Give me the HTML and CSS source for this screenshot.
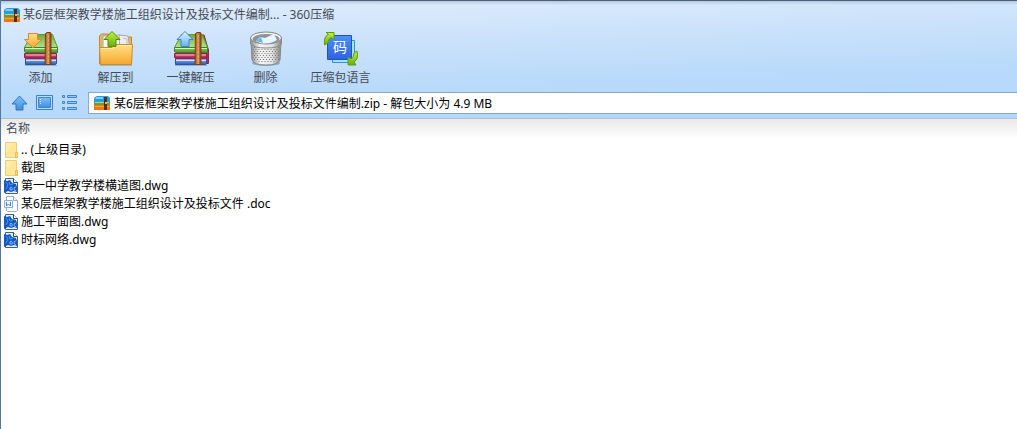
FILE: index.html
```html
<!DOCTYPE html>
<html lang="zh-CN">
<head>
<meta charset="utf-8">
<title>360压缩</title>
<link rel="stylesheet" href="styles.css">
</head>
<body>
<svg class="defs" aria-hidden="true">
  <defs>
    <linearGradient id="green" x2="0" y2="1"><stop stop-color="#6da83f"/><stop offset=".5" stop-color="#93c765"/><stop offset="1" stop-color="#b5df8c"/></linearGradient>
    <linearGradient id="spine" x2="0" y2="1"><stop stop-color="#8ccf5b"/><stop offset="1" stop-color="#45962a"/></linearGradient>
    <linearGradient id="red" x2="0" y2="1"><stop stop-color="#dc6089"/><stop offset="1" stop-color="#a51843"/></linearGradient>
    <linearGradient id="blue" x2="0" y2="1"><stop stop-color="#8fc0f5"/><stop offset="1" stop-color="#2858b4"/></linearGradient>
    <linearGradient id="belt"><stop stop-color="#9a4c18"/><stop offset=".45" stop-color="#d89458"/><stop offset="1" stop-color="#8c4414"/></linearGradient>
    <linearGradient id="orange" x2="0" y2="1"><stop stop-color="#ffe08a"/><stop offset="1" stop-color="#f8a62c"/></linearGradient>
    <linearGradient id="lime" x2="0" y2="1"><stop stop-color="#c8ef3c"/><stop offset="1" stop-color="#69ae0c"/></linearGradient>
    <linearGradient id="sky" x2="0" y2="1"><stop stop-color="#e2f5ff"/><stop offset="1" stop-color="#62b0f5"/></linearGradient>
    <linearGradient id="nav" x2="0" y2="1"><stop stop-color="#7cc0f8"/><stop offset="1" stop-color="#3f8fe0"/></linearGradient>
    <linearGradient id="tile" x2="0" y2="1"><stop stop-color="#4a92f5"/><stop offset="1" stop-color="#2d62dd"/></linearGradient>
    <linearGradient id="steel"><stop stop-color="#8c8c8c"/><stop offset=".3" stop-color="#f4f4f4"/><stop offset=".7" stop-color="#e4e4e4"/><stop offset="1" stop-color="#858585"/></linearGradient>
    <pattern id="holes" width="3" height="4" patternUnits="userSpaceOnUse"><path d="M0 0h1v1H0zM1.500 2h1v1h-1z" fill="#777"/></pattern>
    <symbol id="books" viewBox="0 0 36 36">
      <path d="M2 34h32v1H2z" fill="#5a86b8" opacity=".5"/>
      <path d="M2.500 27.500h31v5l-1 1h-30z" fill="url(#blue)" stroke="#2a539e"/>
      <path d="M3 29h30v1H3z" fill="#cfe3ff"/>
      <path d="M1.500 22.500h32v5h-31l-1-1z" fill="url(#red)" stroke="#9a1c48"/>
      <path d="M3 23.500h30v1H3z" fill="#f2b6ca"/>
      <path d="M8.500 3.500h21l5 13h-33z" fill="url(#green)" stroke="#5a9c38"/>
      <path d="M1.500 16.500h33v5h-32l-1-1z" fill="url(#spine)" stroke="#3b8524"/>
      <path d="M2 17h32v1H2z" fill="#d6f2bc"/>
      <path d="M22.500 2.500l1.500-1h3.500l.5 1v31h-6z" fill="url(#belt)" stroke="#81400f"/>
      <path d="M25.500 4v29" stroke="#f0bf8b" stroke-dasharray="3 1" opacity=".6"/>
    </symbol>
    <symbol id="archive" viewBox="0 0 16 14">
      <path d="M1 1l2-1h11l2 2v5H0V2z" fill="#2c9be2"/>
      <path d="M2 1h7v2H1z" fill="#7bd0f8"/>
      <path d="M0 6h16v3H0z" fill="#5da528"/><path d="M1 6h14v1H1z" fill="#b4db78"/>
      <path d="M0 9h16v5H0z" fill="#ee7519"/><path d="M1 10h14v1H1z" fill="#fba63c"/>
      <path d="M10 1h3v13h-3z" fill="#5a2a16"/><path d="M11 6h2v2h-2z" fill="#e9b071"/>
    </symbol>
    <symbol id="folder" viewBox="0 0 14 16">
      <path d="M1.500.5h11v10h1v5h-12z" fill="#ffe596" stroke="#edce70"/>
      <path d="M2 1h8L2 11z" fill="#fff0b5" opacity=".7"/>
      <path d="M11.500 10.500h2v5h-2z" fill="#f8d876" stroke="#e2bf62"/>
    </symbol>
    <symbol id="dwg" viewBox="0 0 14 16">
      <path d="M1.500.5h8l4 4v11h-12z" fill="#e6f1fc" stroke="#3f5f85"/>
      <path d="M0 2l3 1 3-1 2 3 4 1 1 3v5l-3-1-3 1-3-1-4 2z" fill="#1358c4"/>
      <path d="M2 4l2 3-2 4M5 4l1 3 3-1" stroke="#429cf0" fill="none"/>
      <path d="M6 9.500q3-1 2 2.500H6zM12 9q-2.500 0-2 2t2 1.500" fill="none" stroke="#a8cdf5" stroke-width=".8"/>
      <path d="M9.500.5v4h4" fill="#fff" stroke="#2c4461"/>
    </symbol>
    <symbol id="doc" viewBox="0 0 14 16">
      <path d="M2.500.5h7l4 4v10l-1 1h-9l-1-1z" fill="#fff" stroke="#9aa9bd"/>
      <path d="M9.500.5v4h4" fill="#eef3fa" stroke="#9aa9bd"/>
      <path d="M.5 4.500h8v7h-8z" fill="#f2f7ff" stroke="#8aaee0"/>
      <path d="M2.500 6v4l2-2 2 2V6" fill="none" stroke="#4a82cf"/>
    </symbol>
  </defs>
</svg>
<div class="window">
  <header class="chrome">
    <div class="titlebar">
      <svg class="app-icon"><use href="#archive"/></svg>
      <h1 class="title">某6层框架教学楼施工组织设计及投标文件编制... - 360压缩</h1>
    </div>
    <div class="toolbar">
      <button class="tool" type="button">
        <svg class="tool-icon" viewBox="0 0 36 36"><use href="#books"/><path d="M5.500 2.500h9v6h4l-8.500 8.500-8.500-8.500h4z" fill="url(#orange)" stroke="#d98a28"/></svg>
        <span>添加</span>
      </button>
      <button class="tool" type="button">
        <svg class="tool-icon" viewBox="0 0 36 36">
          <path d="M2 34h32v1H2z" fill="#67809b" opacity=".4"/>
          <path d="M1.500 5l2-2h7l2 3h21v27h-32z" fill="#e8b658" stroke="#c08c30"/>
          <path d="M5 5l17-1 1 16H5z" fill="#fafafa" stroke="#aaa"/>
          <path d="M21 4l9 1 2 14H22z" fill="#eee" stroke="#aaa"/><path d="M25 7l4 1v10" fill="none" stroke="#bbb"/>
          <path d="M1.500 16.500H14l3-3h17.500l-1 20h-31z" fill="url(#orange)" stroke="#cf8d20"/>
          <path d="M3 17.500h11.500l3-3h16" fill="none" stroke="#fff0b0"/>
          <path d="M14 .5l8 8h-4v7h-8v-7H6z" fill="url(#lime)" stroke="#4b920b"/>
        </svg>
        <span>解压到</span>
      </button>
      <button class="tool" type="button">
        <svg class="tool-icon" viewBox="0 0 36 36"><path d="M29 4h2l5 17v11l-3 1z" fill="#b92453" stroke="#8e1740"/><use href="#books"/><path d="M12 .5l8 8h-4v7H8v-7H4z" fill="url(#sky)" stroke="#3f83ce"/></svg>
        <span>一键解压</span>
      </button>
      <button class="tool" type="button">
        <svg class="tool-icon" viewBox="0 0 36 36">
          <ellipse cx="18" cy="32" rx="14" ry="3" fill="#5f7893" opacity=".5"/>
          <path d="M3 10l1 19q2 5 14 5t14-5l1-19z" fill="url(#steel)" stroke="#858585"/>
          <path d="M4 15q14 6 28 0l-1 14q-13 6-26 0z" fill="url(#holes)"/>
          <path d="M2.500 7v6q4 4 15.500 4t15.500-4V7z" fill="url(#steel)" stroke="#8a8a8a"/>
          <ellipse cx="18" cy="7" rx="15.500" ry="6" fill="#f5f5f5" stroke="#858585"/>
          <ellipse cx="18" cy="8" rx="13.500" ry="5" fill="#8c9399"/>
          <path d="M8 10l4-4 5 1 9-4 3 6q-8 5-17 3z" fill="#e9f5fd"/><path d="M8 10l5-4 2 6z" fill="#67b6e8"/>
        </svg>
        <span>删除</span>
      </button>
      <button class="tool" type="button">
        <svg class="tool-icon" viewBox="0 0 36 36">
          <path d="M9.500 9.500h22v22h-22z" fill="#a6e2ff" stroke="#2397dd"/>
          <path d="M4.500 4.500h24v24h-24z" fill="url(#tile)" stroke="#2252bb"/>
          <text class="glyph" x="17" y="21" text-anchor="middle">码</text>
          <path d="M1.500 14q-1-9 4-10.500L3 1.500h8v7l-3-2Q5 8 5 12z" fill="url(#lime)" stroke="#5b9e16"/>
          <path d="M34 20q2 8-3 11l2 3h-8v-8l3 2q3-2 3-6z" fill="url(#lime)" stroke="#5b9e16"/>
        </svg>
        <span>压缩包语言</span>
      </button>
    </div>
    <div class="navbar">
      <button class="nav" type="button" aria-label="上级目录"><svg viewBox="0 0 17 16"><path d="M8.500 1l7.500 8h-4v6H5V9H1z" fill="url(#nav)" stroke="#3377bf"/></svg></button>
      <button class="nav" type="button" aria-label="图标视图"><svg viewBox="0 0 17 16"><path d="M.5.500h16v14H.5z" fill="#b7ddfc" stroke="#3b82cb"/><path d="M2.500 2.500h12v10h-12z" fill="url(#nav)" stroke="#4388cd"/><path d="M4 4h1v1H4zM4 6h1v1H4zM4 8h1v1H4z" fill="#d9efff"/></svg></button>
      <button class="nav" type="button" aria-label="列表视图"><svg viewBox="0 0 17 16"><path d="M1.500.5h2v2h-2zM1.500 6.500h2v2h-2zM1.500 12.500h2v2h-2zM6.500.5h9v2h-9zM6.500 6.500h9v2h-9zM6.500 12.500h9v2h-9z" fill="#8ec8fa" stroke="#4384c6"/></svg></button>
      <label class="address"><svg class="app-icon"><use href="#archive"/></svg>
        <input class="path" type="text" aria-label="地址" value="某6层框架教学楼施工组织设计及投标文件编制.zip - 解包大小为 4.9 MB"></label>
    </div>
  </header>
  <main class="content">
    <table class="files">
      <thead><tr><th scope="col">名称</th></tr></thead>
      <tbody>
        <tr><td><div class="file"><svg><use href="#folder"/></svg><span>.. (上级目录)</span></div></td></tr>
        <tr><td><div class="file"><svg><use href="#folder"/></svg><span>截图</span></div></td></tr>
        <tr><td><div class="file"><svg><use href="#dwg"/></svg><span>第一中学教学楼横道图.dwg</span></div></td></tr>
        <tr><td><div class="file"><svg><use href="#doc"/></svg><span>某6层框架教学楼施工组织设计及投标文件 .doc</span></div></td></tr>
        <tr><td><div class="file"><svg><use href="#dwg"/></svg><span>施工平面图.dwg</span></div></td></tr>
        <tr><td><div class="file"><svg><use href="#dwg"/></svg><span>时标网络.dwg</span></div></td></tr>
      </tbody>
    </table>
  </main>
</div>
</body>
</html>
```
FILE: styles.css
```css
* { box-sizing: border-box; }
body {
  margin: 0;
  background: #fff;
  color: #000;
  font: 12px/18px "Noto Sans", "Noto Sans CJK SC", sans-serif;
}
button, input { font: inherit; }
svg { display: block; flex: none; }
.defs { position: absolute; width: 0; height: 0; }
.window {
  display: flex;
  flex-direction: column;
  min-height: 100vh;
  border-left: 1px solid #55779c;
}
.chrome {
  border-top: 1px solid #465f7d;
  border-bottom: 1px solid #b5bcc4;
  background:
    linear-gradient(#b8c8dc, transparent 4px),
    linear-gradient(179deg, #b3d7fc 0, #b7d9fa 30%, #c9e1fa 65%, #dcebfc 100%);
  background:
    linear-gradient(#b8c8dc, transparent 4px),
    linear-gradient(178deg, #dcebfc 8%, #cbe2fb 35%, #b9dafa 65%, #b3d7fc 90%);
}
.titlebar {
  display: flex;
  align-items: center;
  gap: 3px;
  padding: 5px 3px 4px;
}
.app-icon { width: 16px; height: 14px; }
.title { margin: 0; font-size: 12px; font-weight: 400; color: #454b55; white-space: nowrap; }
.toolbar { display: flex; padding-left: 2px; }
.tool {
  display: flex;
  flex-direction: column;
  align-items: center;
  gap: 2px;
  width: 75px;
  padding: 3px 0 2px;
  border: 0;
  background: none;
  color: #454b55;
  white-space: nowrap;
}
.tool-icon { width: 36px; height: 36px; }
.glyph { fill: #fff; font: 14px "Noto Sans CJK SC", sans-serif; }
.navbar { display: flex; align-items: center; gap: 8px; padding: 3px 0 4px 10px; }
.nav { width: 17px; padding: 0; border: 0; background: none; }
.nav svg { width: 17px; height: 16px; }
.address {
  display: flex;
  flex: 1;
  align-items: center;
  gap: 4px;
  height: 22px;
  margin-left: 2px;
  padding-left: 5px;
  border: 1px solid #86a9cf;
  border-right: 0;
  background: #fff;
}
.path { flex: 1; min-width: 0; padding: 1px 0 0; border: 0; outline: 0; background: none; color: #000; }
.content { flex: 1; background: linear-gradient(#e9e9e9, #fff 20px); }
.files { width: 100%; border-collapse: collapse; }
.files th { padding: 1px 5px 3px; text-align: left; font-weight: 400; color: #454b55; }
.files td { padding: 0; }
.file { display: flex; align-items: center; gap: 3px; height: 18px; padding-left: 3px; white-space: nowrap; }
.file svg { width: 14px; height: 16px; }
```
